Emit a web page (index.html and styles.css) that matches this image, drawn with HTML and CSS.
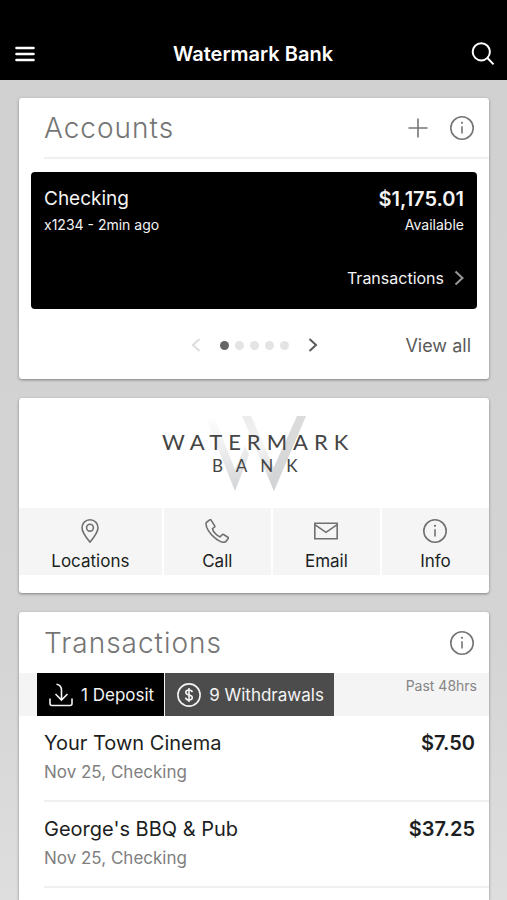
FILE: index.html
```html
<!DOCTYPE html>
<html lang="en">
<head>
<meta charset="utf-8">
<meta name="viewport" content="width=device-width, initial-scale=1">
<title>Watermark Bank</title>
<link rel="stylesheet" href="styles.css">
</head>
<body>
<svg class="sprite" aria-hidden="true">
  <symbol id="info" viewBox="0 0 24 24">
    <circle cx="12" cy="12" r="11.2"/>
    <path d="M12 10.2v7.3"/>
    <circle class="solid" cx="12" cy="6.8" r="1.1"/>
  </symbol>
</svg>

<header class="topbar">
  <button class="icon-button" aria-label="Menu">
    <svg class="menu-icon" width="20" height="16" viewBox="0 0 20 16"><path d="M1.500 2h17M1.500 8h17M1.500 14h17"/></svg>
  </button>
  <h1 class="topbar-title">Watermark Bank</h1>
  <button class="icon-button" aria-label="Search">
    <svg width="24" height="24" viewBox="0 0 24 24"><circle cx="10.300" cy="9.800" r="8.600"/><path d="M16.400 16l6.200 6.400"/></svg>
  </button>
</header>

<main class="cards">
  <section class="card">
    <div class="card-head ruled">
      <h2 class="card-title">Accounts</h2>
      <div class="card-tools">
        <button class="icon-button" aria-label="Add account">
          <svg width="20" height="20" viewBox="0 0 20 20"><path d="M10 .5v19M.5 10h19"/></svg>
        </button>
        <button class="icon-button" aria-label="About accounts">
          <svg width="24" height="24"><use href="#info"/></svg>
        </button>
      </div>
    </div>
    <article class="account">
      <div class="line">
        <span class="name">Checking</span>
        <span class="balance">$1,175.01</span>
      </div>
      <div class="line account-meta">
        <span>x1234 - 2min ago</span>
        <span>Available</span>
      </div>
      <a class="account-link" href="#transactions">Transactions
        <svg width="10" height="16" viewBox="0 0 10 16"><path d="M1.500 1.500L8.500 8l-7 6.500"/></svg>
      </a>
    </article>
    <div class="pager">
      <div class="pager-controls">
        <button class="icon-button prev" aria-label="Previous account" disabled>
          <svg width="10" height="14" viewBox="0 0 10 14"><path d="M8.500 1L2 7l6.500 6"/></svg>
        </button>
        <div class="dots">
          <span class="dot current"></span><span class="dot"></span><span class="dot"></span><span class="dot"></span><span class="dot"></span>
        </div>
        <button class="icon-button" aria-label="Next account">
          <svg width="10" height="14" viewBox="0 0 10 14"><path d="M1.500 1L8 7l-6.500 6"/></svg>
        </button>
      </div>
      <a class="view-all" href="#accounts">View all</a>
    </div>
  </section>

  <section class="card">
    <div class="brand">
      <svg width="200" height="78" viewBox="0 0 200 78" role="img" aria-label="Watermark Bank">
        <defs>
          <linearGradient id="fadeLeft" x1="0" y1="0" x2="0" y2="1">
            <stop offset="0" stop-color="#fff"/><stop offset=".4" stop-color="#f0f0f1"/><stop offset="1" stop-color="#d2d3d5"/>
          </linearGradient>
          <linearGradient id="fadeMid" x1="0" y1="0" x2="0" y2="1">
            <stop offset="0" stop-color="#ececec"/><stop offset=".4" stop-color="#f4f4f4"/><stop offset="1" stop-color="#cfcfd1"/>
          </linearGradient>
          <linearGradient id="fadeRight" x1="0" y1="0" x2="0" y2="1">
            <stop offset="0" stop-color="#dcdcdc"/><stop offset="1" stop-color="#d2d3d5"/>
          </linearGradient>
        </defs>
        <path fill="url(#fadeLeft)" d="M51 2h9l21 54 10-24 4 9-14 36z"/>
        <path fill="url(#fadeMid)" d="M88 2h9l26 59-3 16z"/>
        <path fill="url(#fadeRight)" d="M143 2h9l-32 75-5-13z"/>
        <text class="wordmark" x="8" y="36">WATERMARK</text>
        <text class="wordmark-sub" x="58" y="58">BANK</text>
      </svg>
    </div>
    <nav class="actions">
      <a class="action" href="#locations">
        <svg width="24" height="24" viewBox="0 0 24 24"><path d="M12 .8c-4.700 0-8 3.500-8 7.900C4 13.500 9 19.500 12 23.200 15 19.500 20 13.500 20 8.700 20 4.300 16.700.8 12 .8z"/><circle cx="12" cy="8.700" r="3.400"/></svg>
        Locations
      </a>
      <a class="action" href="#call">
        <svg width="24" height="24" viewBox="0 0 24 24"><path d="M4.700.9L1.300 3.600C-.2 7.800 5.200 15 9.600 18.600c4 3.300 8.500 5.600 11 4.200l2.600-3.200c.3-.5.2-1-.3-1.400l-4.400-2.700c-.5-.3-1-.2-1.400.2l-2 2.200c-3-.9-6.700-4.600-7.700-8.200l2-1.500c.5-.4.600-.9.300-1.400L6.100 1.100C5.700.6 5.200.6 4.700.9z"/></svg>
        Call
      </a>
      <a class="action" href="#email">
        <svg width="24" height="24" viewBox="0 0 24 24"><path d="M.8 4.200h22.400v15.600H.8zM.8 5.600L12 13.300 23.200 5.600"/></svg>
        Email
      </a>
      <a class="action" href="#info-page">
        <svg width="24" height="24"><use href="#info"/></svg>
        Info
      </a>
    </nav>
  </section>

  <section class="card" id="transactions">
    <div class="card-head">
      <h2 class="card-title">Transactions</h2>
      <button class="icon-button" aria-label="About transactions">
        <svg width="24" height="24"><use href="#info"/></svg>
      </button>
    </div>
    <div class="summary">
      <button class="tab">
        <svg width="24" height="24" viewBox="0 0 24 24"><path d="M1 15.500v5q0 2 2 2h18q2 0 2-2v-5M7.500 1.300q5 .7 5 6.200V17M6.500 11l6 6 6-6"/></svg>
        1 Deposit
      </button>
      <button class="tab tab-alt">
        <svg width="24" height="24" viewBox="0 0 24 24"><circle cx="12" cy="12" r="11.100"/><path d="M15.300 9.200c-.3-1.400-1.500-2.200-3.300-2.200s-3.200.9-3.200 2.400c0 3.500 6.500 1.700 6.500 5.200 0 1.600-1.400 2.400-3.300 2.400s-3.200-.8-3.400-2.400M12 5v14"/></svg>
        9 Withdrawals
      </button>
      <span class="period">Past 48hrs</span>
    </div>
    <ul class="transactions">
      <li class="transaction">
        <div class="line"><span>Your Town Cinema</span><span class="amount">$7.50</span></div>
        <p class="detail">Nov 25, Checking</p>
      </li>
      <li class="transaction">
        <div class="line"><span>George's BBQ &amp; Pub</span><span class="amount">$37.25</span></div>
        <p class="detail">Nov 25, Checking</p>
      </li>
    </ul>
  </section>
</main>
</body>
</html>
```

FILE: styles.css
```css
* {
  box-sizing: border-box;
}

body {
  display: flex;
  flex-direction: column;
  min-height: 100vh;
  margin: 0;
  background: linear-gradient(#d0d0d0, #d4d4d4 70%, #dedede);
  color: #1c1e22;
  font-family: Inter, "Liberation Sans", sans-serif;
}

h1, h2, p, ul {
  margin: 0;
  padding: 0;
  font-weight: 400;
}

a {
  color: inherit;
  text-decoration: none;
}

svg {
  display: block;
  flex: none;
  fill: none;
  stroke: currentColor;
  stroke-width: 1.6;
}

.solid {
  fill: currentColor;
  stroke: none;
}

.sprite {
  position: absolute;
  width: 0;
  height: 0;
}

.icon-button {
  display: flex;
  padding: 0;
  border: 0;
  background: none;
  color: inherit;
}

.topbar {
  display: flex;
  align-items: center;
  justify-content: space-between;
  height: 80px;
  padding: 27px 12px 0 15px;
  background: #000;
  color: #fff;
}

.topbar svg {
  stroke-width: 2;
}

.topbar .menu-icon {
  stroke-width: 2.6;
  stroke-linecap: round;
}

.topbar-title {
  font-size: 20px;
  font-weight: 600;
}

.cards {
  display: flex;
  flex: 1;
  flex-direction: column;
  gap: 19px;
  padding: 18px 18px 0 19px;
}

.card {
  border-radius: 3px;
  background: #fff;
  box-shadow: 0 1px 3px #0006;
}

.card:last-child {
  flex: 1;
  border-radius: 3px 3px 0 0;
}

.card-head {
  display: flex;
  align-items: center;
  justify-content: space-between;
  height: 61px;
  margin-left: 25px;
  padding-right: 15px;
  color: #757575;
}

.ruled {
  border-bottom: 2px solid #f0f0f0;
}

.card-title {
  font-size: 28px;
  font-weight: 300;
  letter-spacing: 1px;
}

.card-tools {
  display: flex;
  align-items: center;
  gap: 22px;
}

.line {
  display: flex;
  justify-content: space-between;
}

.account {
  margin: 13px 12px 0;
  padding: 13px;
  height: 137px;
  border-radius: 4px;
  background: #000;
  color: #f4f4f4;
}

.name,
.balance {
  font-size: 19px;
  line-height: 28px;
}

.balance {
  font-size: 20px;
  font-weight: 600;
}

.account-meta {
  font-size: 14px;
  line-height: 24px;
}

.account-link {
  display: flex;
  align-items: center;
  justify-content: flex-end;
  gap: 10px;
  margin-top: 29px;
  font-size: 16px;
  line-height: 24px;
}

.account-link svg {
  color: #999;
  stroke-width: 2;
}

.pager {
  display: grid;
  grid-template-columns: 1fr auto 1fr;
  align-items: center;
  height: 70px;
  padding: 2px 18px 0;
  color: #5a5a5a;
}

.pager-controls {
  display: flex;
  grid-column: 2;
  align-items: center;
  gap: 19px;
}

.pager svg {
  stroke-width: 2;
}

.prev {
  color: #ddd;
}

.dots {
  display: flex;
  gap: 6px;
}

.dot {
  width: 9px;
  height: 9px;
  border-radius: 50%;
  background: #e4e4e4;
}

.current {
  background: #666;
}

.view-all {
  justify-self: end;
  font-size: 18px;
}

.brand {
  display: flex;
  justify-content: center;
  padding: 16px 0;
}

.brand svg {
  stroke: none;
}

.wordmark,
.wordmark-sub {
  fill: #444;
  font-family: Lato, sans-serif;
}

.wordmark {
  font-size: 22px;
  letter-spacing: 6px;
}

.wordmark-sub {
  font-size: 17px;
  letter-spacing: 13px;
}

.actions {
  display: grid;
  grid-template-columns: 4fr 3fr 3fr 3fr;
  gap: 2px;
  padding-bottom: 18px;
}

.action {
  display: flex;
  flex-direction: column;
  align-items: center;
  gap: 7px;
  padding: 11px 0 3px;
  background: #f5f5f5;
  font-size: 17px;
  line-height: 22px;
}

.action svg {
  color: #707070;
}

.summary {
  display: flex;
  height: 43px;
  padding: 0 12px 0 18px;
  gap: 1px;
  background: #f4f4f4;
}

.tab {
  display: flex;
  align-items: center;
  gap: 8px;
  padding: 0 10px 0 12px;
  border: 0;
  background: #000;
  color: #f4f4f4;
  font-family: inherit;
  font-size: 17px;
}

.tab-alt {
  background: #4c4c4c;
}

.period {
  margin-left: auto;
  padding-top: 4px;
  color: #858585;
  font-size: 14px;
  line-height: 18px;
}

.transactions {
  margin-left: 25px;
  list-style: none;
}

.transaction {
  padding: 13px 14px 15px 0;
  border-bottom: 2px solid #f0f0f0;
  font-size: 20px;
  line-height: 28px;
}

.amount {
  font-weight: 600;
}

.detail {
  padding-top: 2px;
  color: #808080;
  font-size: 17px;
  line-height: 26px;
}
```
